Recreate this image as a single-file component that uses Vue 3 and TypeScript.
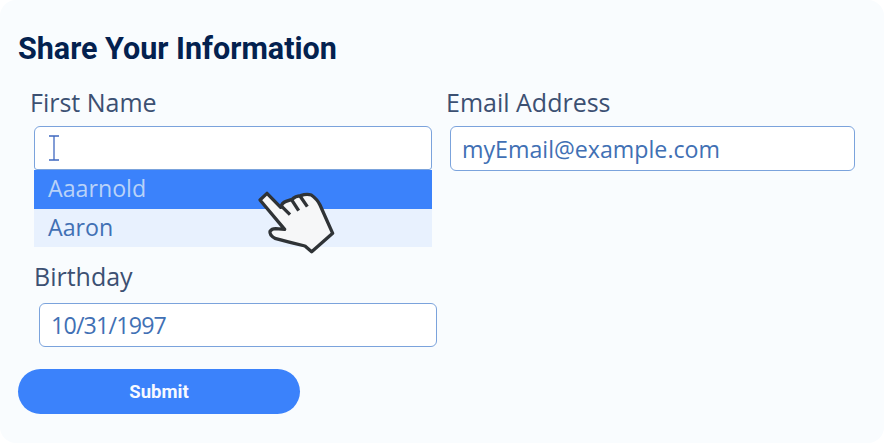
<script setup lang="ts">
const options: string[] = ['Aaarnold', 'Aaron']
</script>

<template>
  <div class="card">
    <h1 class="title">Share Your Information</h1>
    <div class="columns">
      <div class="col-left">
        <label class="label">First Name</label>
        <div class="input active">
          <svg class="caret" width="12" height="26" viewBox="0 0 12 26" aria-hidden="true">
            <path d="M1 1h10M6 1v24M1 25h10" fill="none" stroke="#3f68c0" stroke-width="1.3" />
          </svg>
        </div>
        <ul class="menu">
          <li v-for="(o, i) in options" :key="o" class="opt" :class="{ sel: i === 0 }">{{ o }}</li>
        </ul>
        <label class="label birthday-label">Birthday</label>
        <div class="input birthday">10/31/1997</div>
      </div>
      <div class="col-right">
        <label class="label">Email Address</label>
        <div class="input">myEmail@example.com</div>
      </div>
    </div>
    <button class="submit">Submit</button>
    <svg class="hand" width="120" height="90" viewBox="0 0 360 270" aria-hidden="true">
      <path
        d="M90 90 L111 70 L152 112 Q156 98 168 94 L186 88 Q196 78 212 77 Q230 70 244 75 Q262 88 270 105 L308 190 L245 245 L225 228 Q175 216 135 205 Q118 195 120 184 Q125 176 137 176 L164 178 Z"
        fill="#f6f7f8" stroke="#2f3336" stroke-width="10" stroke-linejoin="round"
      />
      <path d="M152 106 L180 134M184 88 L206 122M210 78 L232 110" fill="none" stroke="#2f3336" stroke-width="10" />
    </svg>
  </div>
</template>

<style>
html, body { margin: 0; background: #fff; }
</style>

<style scoped>
.card {
  position: relative;
  box-sizing: border-box;
  width: 884px;
  height: 443px;
  padding: 31px 18px 0;
  background: #f9fcfe;
  border-radius: 16px;
  overflow: hidden;
  font-family: "Open Sans", sans-serif;
}
.title {
  margin: 0;
  font-size: 30.5px;
  line-height: 36px;
  font-weight: 700;
  font-family: "Roboto", sans-serif;
  color: #03214f;
}
.columns {
  display: flex;
  margin-top: 20px;
}
.col-left { width: 428px; padding-left: 12px; box-sizing: border-box; }
.col-right { width: 420px; }
.label {
  display: block;
  font-size: 25px;
  line-height: 30px;
  color: #3c5072;
}
.input {
  box-sizing: border-box;
  width: 405px;
  height: 45px;
  margin: 9px 0 0 4px;
  padding: 0 11px;
  display: flex;
  align-items: center;
  background: #fff;
  border: 1px solid #7ba3dc;
  border-radius: 6px;
  font-size: 23.2px;
  color: #4170b4;
}
.col-left .input { width: 398px; }
.input.active { border-radius: 6px 6px 3px 3px; position: relative; z-index: 1; height: 44px; padding-left: 13px; }
.caret { display: block; }
.menu {
  list-style: none;
  margin: 0 0 0 4px;
  padding: 0;
  width: 398px;
}
.opt {
  height: 38.5px;
  line-height: 37px;
  padding-left: 14px;
  font-size: 23.2px;
  background: #e8f1fe;
  color: #4170b4;
}
.opt.sel { background: #3b82fb; color: #b9d2f8; }
.birthday-label { margin: 14px 0 0 4px; }
.input.birthday { margin: 12px 0 0 9px; height: 44px; letter-spacing: -0.8px; }
.submit {
  display: block;
  width: 282px;
  height: 45px;
  margin-top: 22px;
  border: 0;
  border-radius: 23px;
  background: #3b82fb;
  color: #f6f9ff;
  font-family: "Roboto", sans-serif;
  font-size: 18.5px;
  font-weight: 700;
}
.hand { position: absolute; left: 230px; top: 170px; }
</style>
